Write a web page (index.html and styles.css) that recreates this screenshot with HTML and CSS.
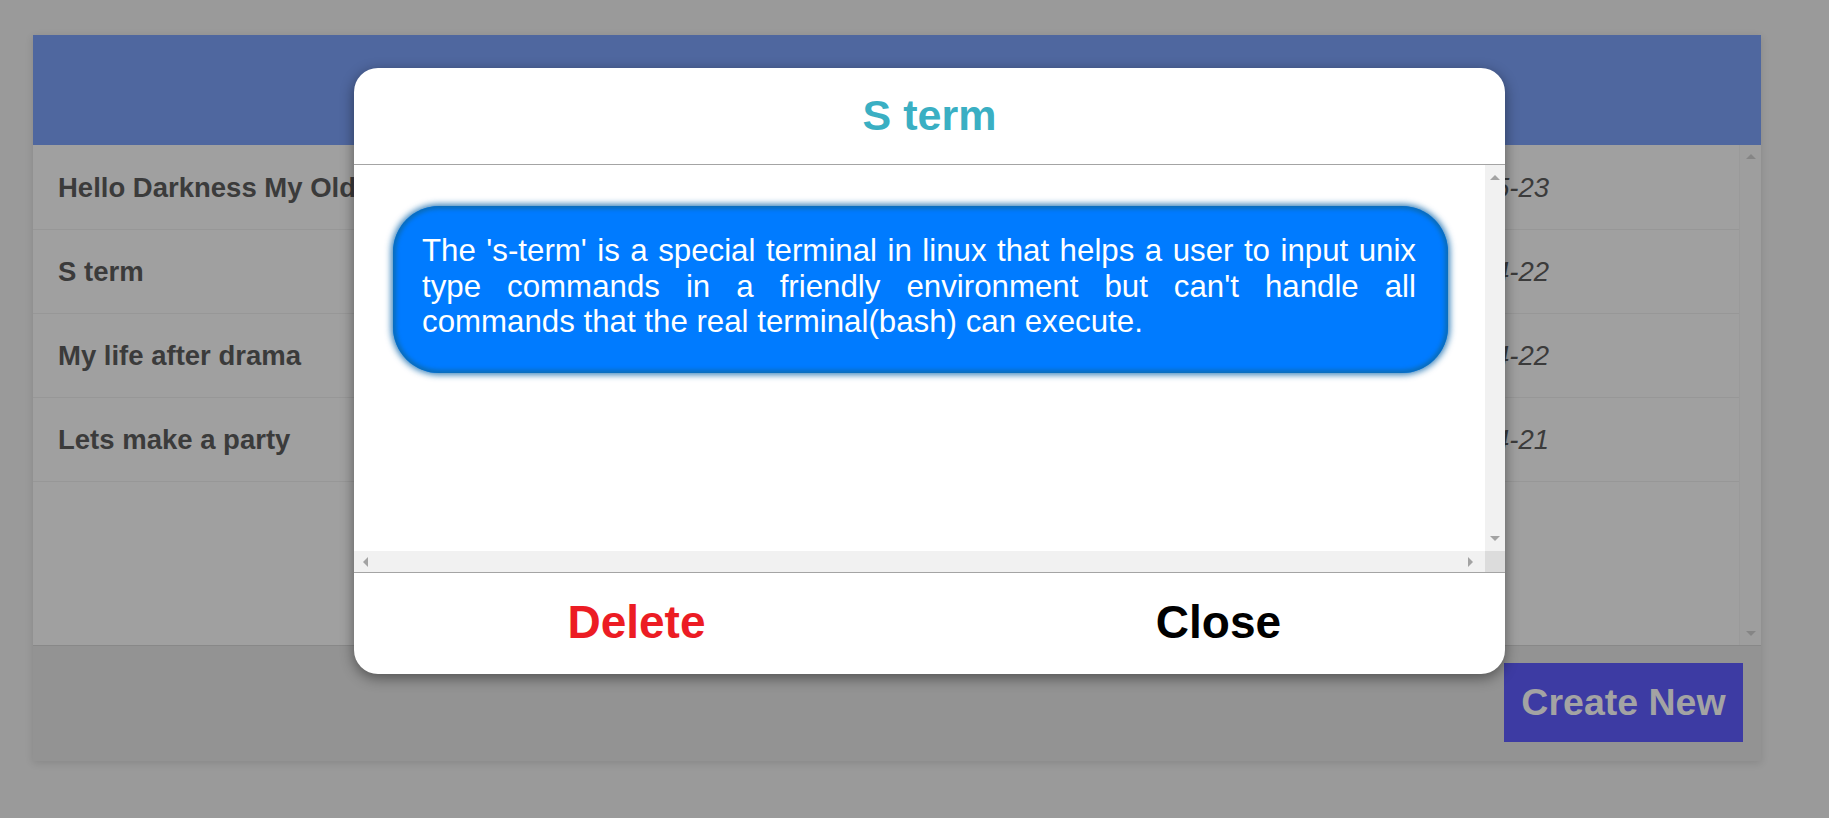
FILE: index.html
```html
<!DOCTYPE html>
<html>
<head>
<meta charset="utf-8">
<title>Notes</title>
<link rel="stylesheet" href="styles.css">
</head>
<body>
<div class="page">
  <div class="card">
    <div class="card-header"></div>
    <div class="list-wrap">
      <div class="list">
        <div class="row"><span class="row-title">Hello Darkness My Old Friend</span><span class="row-date">2021-05-23</span></div>
        <div class="row"><span class="row-title">S term</span><span class="row-date">2021-04-22</span></div>
        <div class="row"><span class="row-title">My life after drama</span><span class="row-date">2021-04-22</span></div>
        <div class="row"><span class="row-title">Lets make a party</span><span class="row-date">2021-04-21</span></div>
      </div>
      <div class="vbar vbar-dim">
        <span class="arrow up dim"></span>
        <span class="arrow down dim"></span>
      </div>
    </div>
    <div class="card-footer">
      <button class="create-btn">Create New</button>
    </div>
  </div>
</div>

<div class="modal">
  <div class="modal-header">S term</div>
  <div class="modal-body">
    <div class="body-main">
      <div class="body-content">
        <div class="bubble">The 's-term' is a special terminal in linux that helps a user to input unix type commands in a friendly environment but can't handle all commands that the real terminal(bash) can execute.</div>
      </div>
      <div class="vbar">
        <span class="arrow up"></span>
        <span class="arrow down"></span>
      </div>
    </div>
    <div class="hbar-row">
      <div class="hbar">
        <span class="arrow left"></span>
        <span class="arrow right"></span>
      </div>
      <div class="corner"></div>
    </div>
  </div>
  <div class="modal-footer">
    <button class="foot-btn delete">Delete</button>
    <button class="foot-btn close">Close</button>
  </div>
</div>
</body>
</html>
```

FILE: styles.css
```css
* { box-sizing: border-box; }

html, body {
  margin: 0;
  padding: 0;
}

body {
  background: #9a9a9a;
  font-family: "Liberation Sans", Arial, sans-serif;
  width: 1829px;
  height: 818px;
  overflow: hidden;
}

.page {
  padding: 35px 0 0 33px;
}

.card {
  width: 1728px;
  display: flex;
  flex-direction: column;
  box-shadow: 0 2px 8px rgba(0, 0, 0, 0.12);
}

.card-header {
  height: 110px;
  background: #4f679f;
}

.list-wrap {
  height: 501px;
  display: flex;
  background: #a0a0a0;
  border-bottom: 1px solid #888888;
}

.list {
  flex: 1;
  padding-top: 1px;
}

.row {
  height: 84px;
  display: flex;
  align-items: center;
  justify-content: space-between;
  padding: 0 190px 0 25px;
  border-bottom: 1px solid #979797;
}

.row-title {
  font-weight: bold;
  font-size: 27.5px;
  color: #3b3b3b;
}

.row-date {
  font-style: italic;
  font-size: 27.5px;
  color: #3b3b3b;
}

.vbar {
  width: 20px;
  display: flex;
  flex-direction: column;
  justify-content: space-between;
  align-items: center;
  padding: 10px 0;
  background: #f1f1f1;
}

.vbar-dim {
  width: 22px;
  background: #9e9e9e;
  border-left: 1px solid #9a9a9a;
  padding: 9px 0 9px;
}

.arrow {
  width: 0;
  height: 0;
  display: block;
}

.arrow.up {
  border-left: 5px solid transparent;
  border-right: 5px solid transparent;
  border-bottom: 5px solid #a3a3a3;
}

.arrow.down {
  border-left: 5px solid transparent;
  border-right: 5px solid transparent;
  border-top: 5px solid #a3a3a3;
}

.arrow.up.dim { border-bottom-color: #858585; }
.arrow.down.dim { border-top-color: #858585; }

.arrow.left {
  border-top: 5px solid transparent;
  border-bottom: 5px solid transparent;
  border-right: 5px solid #a3a3a3;
}

.arrow.right {
  border-top: 5px solid transparent;
  border-bottom: 5px solid transparent;
  border-left: 5px solid #a3a3a3;
}

.card-footer {
  height: 115px;
  background: #939393;
  display: flex;
  justify-content: flex-end;
  align-items: flex-start;
  padding: 17px 18px 0 0;
}

.create-btn {
  height: 79px;
  width: 239px;
  border: none;
  background: #3d3ba3;
  color: #a3a3a3;
  font-family: "Liberation Sans", Arial, sans-serif;
  font-weight: bold;
  font-size: 37.5px;
  padding: 0;
}

/* Modal (overlays the page) */
.modal {
  position: absolute;
  left: 354px;
  top: 68px;
  width: 1151px;
  height: 606px;
  background: #ffffff;
  border-radius: 24px;
  overflow: hidden;
  display: flex;
  flex-direction: column;
  box-shadow: 0 4px 14px rgba(0, 0, 0, 0.45);
}

.modal-header {
  height: 97px;
  flex: none;
  border-bottom: 1px solid #a4a4a4;
  display: flex;
  align-items: center;
  justify-content: center;
  color: #3aafc3;
  font-weight: bold;
  font-size: 43px;
  padding-bottom: 2px;
}

.modal-body {
  height: 407px;
  flex: none;
  display: flex;
  flex-direction: column;
}

.body-main {
  flex: 1;
  display: flex;
  min-height: 0;
}

.body-content {
  flex: 1;
  padding: 41px 37px 0 39px;
}

.bubble {
  height: 167px;
  background: #007bff;
  color: #ffffff;
  border-radius: 46px;
  padding: 27px 32px 0 29px;
  font-size: 31.25px;
  line-height: 35.7px;
  text-align: justify;
  box-shadow: inset 0 0 4px 3px #0a6cb8, 0 0 6px 2px rgba(10, 100, 170, 0.8);
}

.hbar-row {
  height: 21px;
  flex: none;
  display: flex;
}

.hbar {
  flex: 1;
  background: #f1f1f1;
  display: flex;
  justify-content: space-between;
  align-items: center;
  padding: 0 12px 0 9px;
}

.corner {
  width: 20px;
  background: #dcdcdc;
}

.modal-footer {
  flex: 1;
  display: flex;
  border-top: 1px solid #a4a4a4;
}

.foot-btn {
  flex: 1;
  border: none;
  background: transparent;
  font-family: "Liberation Sans", Arial, sans-serif;
  font-weight: bold;
  font-size: 46px;
  padding: 0 0 4px;
}

.foot-btn.delete {
  color: #ec1c24;
  padding-right: 17px;
}

.foot-btn.close {
  color: #000000;
  padding-right: 4px;
}
```
